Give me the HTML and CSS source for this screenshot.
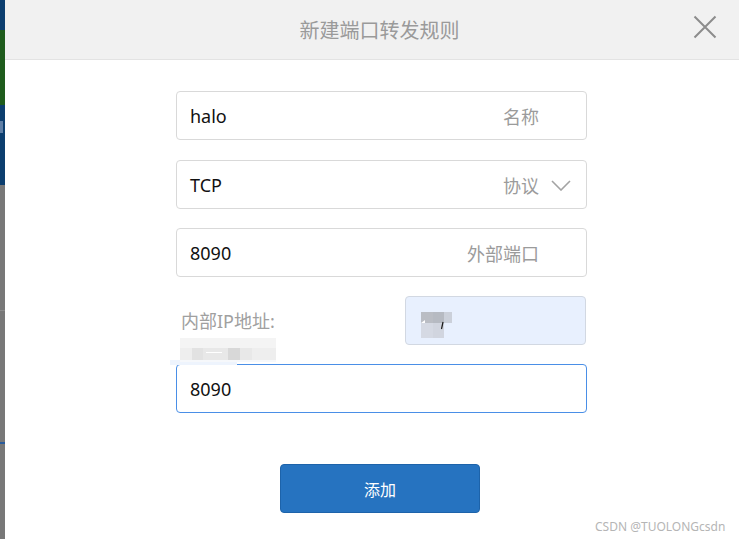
FILE: index.html
```html
<!DOCTYPE html>
<html lang="zh-CN">
<head>
    <meta charset="utf-8">
    <meta name="viewport" content="width=device-width, initial-scale=1.0">
    <title>新建端口转发规则</title>
    <link rel="stylesheet" href="styles.css">
</head>
<body>
    <div id="page">
        <div id="backdrop">
            <div class="bd-top"><div class="bd-green"></div><div class="bd-text"></div></div>
            <div class="bd-bottom"><div class="bd-line"></div><div class="bd-blue"></div></div>
        </div>
        <div id="modal">
            <div id="modalHeader">
                <div class="modal-title">新建端口转发规则</div>
                <button class="close-button" aria-label="close">
                    <svg width="24" height="24" viewBox="0 0 24 24">
                        <path d="M1.5 1.5 L22.5 22.5 M22.5 1.5 L1.5 22.5" stroke="#8c8c8c" stroke-width="2" fill="none"/>
                    </svg>
                </button>
            </div>
            <div id="modalBody">
                <div class="field first">
                    <span class="value">halo</span>
                    <span class="hint">名称</span>
                </div>
                <div class="field select">
                    <span class="value">TCP</span>
                    <span class="hint">协议</span>
                    <svg class="chevron" width="20" height="11" viewBox="0 0 20 11">
                        <path d="M1 1 L10 10 L19 1" stroke="#a3a3a3" stroke-width="1.6" fill="none"/>
                    </svg>
                </div>
                <div class="field">
                    <span class="value">8090</span>
                    <span class="hint">外部端口</span>
                </div>
                <div class="ip-row">
                    <div class="ip-label">
                        <div class="label">内部IP地址:</div>
                        <svg class="mosaic" width="110" height="27" viewBox="0 0 110 27">
                            <rect x="10" y="0" width="96" height="10" fill="#f4f4f4"/>
                            <rect x="10" y="10" width="12" height="12" fill="#eeeeee"/>
                            <rect x="22" y="10" width="11" height="12" fill="#e2e2e2"/>
                            <rect x="33" y="10" width="25" height="12" fill="#e8e8e8"/>
                            <rect x="36" y="14" width="16" height="1" fill="#ffffff"/>
                            <rect x="58" y="10" width="12" height="12" fill="#d8d8d8"/>
                            <rect x="70" y="10" width="12" height="12" fill="#e8e8e8"/>
                            <rect x="82" y="10" width="24" height="12" fill="#eeeeee"/>
                            <rect x="0" y="22" width="67" height="5" fill="#eef4fd"/>
                            <rect x="10" y="22" width="96" height="2" fill="#f6f8fb"/>
                        </svg>
                    </div>
                    <div class="ip-box">
                        <svg width="34" height="28" viewBox="0 0 34 28">
                            <rect x="2" y="0" width="12" height="11" fill="#babdc4"/>
                            <rect x="14" y="0" width="11" height="11" fill="#b6bac2"/>
                            <rect x="25" y="0" width="8" height="11" fill="#cbd0da"/>
                            <rect x="2" y="11" width="12" height="15" fill="#d5d9e3"/>
                            <rect x="14" y="11" width="11" height="15" fill="#d1d5df"/>
                            <path d="M2 11 L6 8 L6 11 Z" fill="#ffffff"/>
                            <path d="M24 10 L22.5 17" stroke="#1a1a1a" stroke-width="1.2"/>
                        </svg>
                    </div>
                </div>
                <div class="field focused">
                    <span class="value">8090</span>
                </div>
                <button class="add-button">添加</button>
            </div>
            <div class="watermark">CSDN @TUOLONGcsdn</div>
        </div>
    </div>
</body>
</html>
```

FILE: styles.css
```css
body {
    margin: 0;
    padding: 0;
    overflow: hidden;
    font-family: "Noto Sans", "Noto Sans CJK SC", sans-serif;
    background-color: #777777;
}

#page {
    display: flex;
    width: 739px;
    height: 539px;
    overflow: hidden;
}

#backdrop {
    flex: 0 0 5px;
    display: flex;
    flex-direction: column;
}

.bd-top {
    height: 185px;
    background-color: #0c3e6f;
    padding-top: 30px;
    box-sizing: border-box;
}

.bd-green {
    height: 75px;
    background-color: #1f5c1d;
}

.bd-text {
    height: 12px;
    margin-top: 16px;
    width: 3px;
    background-color: #5f7fa6;
}

.bd-bottom {
    flex: 1;
    background-color: #787878;
    padding-top: 125px;
}

.bd-line {
    height: 1px;
    background-color: #8c8c8c;
}

.bd-blue {
    height: 2px;
    margin-top: 131px;
    background-color: #2a5c9c;
}

#modal {
    position: relative;
    flex: 0 0 753px;
    background-color: #ffffff;
}

#modalHeader {
    position: relative;
    height: 59px;
    background-color: #f1f1f1;
    border-bottom: 1px solid #e3e3e3;
    display: flex;
    align-items: center;
    justify-content: center;
}

.modal-title {
    font-size: 20px;
    color: #9a9a9a;
    margin-left: -4px;
}

.close-button {
    position: absolute;
    right: 41px;
    top: 15px;
    padding: 0;
    border: none;
    background: none;
    width: 24px;
    height: 24px;
}

#modalBody {
    width: 411px;
    margin: 0 auto;
    padding-top: 31px;
    display: flex;
    flex-direction: column;
    gap: 19px;
}

.field {
    height: 49px;
    box-sizing: border-box;
    border: 1px solid #d9d9d9;
    border-radius: 4px;
    display: flex;
    align-items: center;
    padding: 0 47px 0 13px;
    font-size: 18px;
}

.field.first {
    margin-bottom: 1px;
}

.field.select {
    padding-right: 15px;
}

.field.focused {
    border-color: #4a8fe7;
}

.value {
    flex: 1;
    color: #111111;
}

.hint {
    color: #9b9b9b;
}

.chevron {
    margin-left: 12px;
    margin-top: 2px;
}

.ip-row {
    height: 49px;
    display: flex;
}

.ip-label {
    flex: 1;
    position: relative;
    z-index: 1;
    padding-top: 13px;
    margin-left: -6px;
}

.label {
    font-size: 18px;
    line-height: 24px;
    color: #a0a0a0;
    padding-left: 11px;
}

.mosaic {
    display: block;
    margin-top: 5px;
}

.ip-box {
    width: 181px;
    margin-right: 1px;
    box-sizing: border-box;
    border: 1px solid #d2d8e2;
    border-radius: 4px;
    background-color: #e8f0fe;
    padding: 15px 0 0 13px;
}

.ip-box svg {
    display: block;
}

.add-button {
    align-self: center;
    margin-top: 32px;
    margin-left: -3px;
    width: 200px;
    height: 49px;
    background-color: #2673c0;
    border: 1px solid #1d63aa;
    border-radius: 4px;
    color: #ffffff;
    font-family: "Noto Sans CJK SC", sans-serif;
    font-size: 16px;
}

.watermark {
    position: absolute;
    left: 590px;
    bottom: 4px;
    font-size: 12px;
    color: #b5b5b5;
    font-family: "Noto Sans", sans-serif;
}
```
